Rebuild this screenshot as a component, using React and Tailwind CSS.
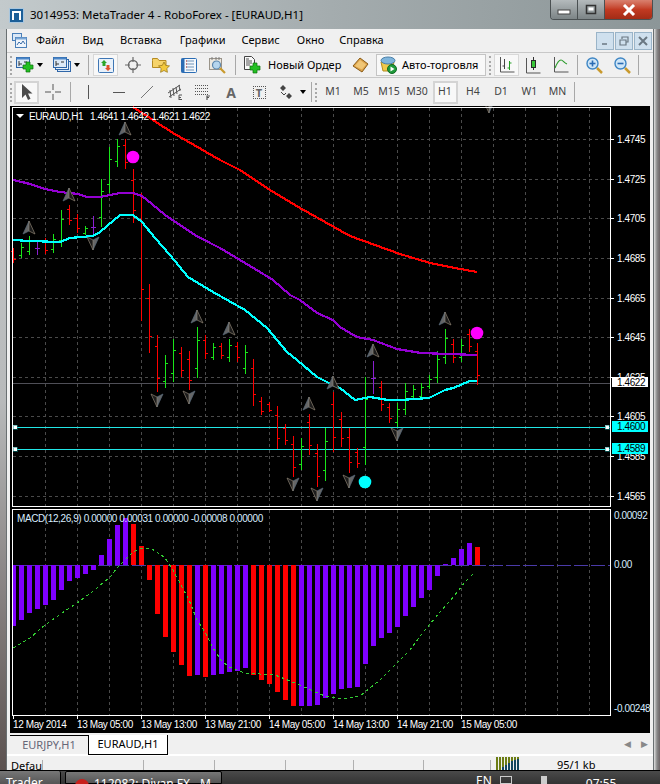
import React from 'react';

const UI = '"Noto Sans", sans-serif';
const CHART_FONT = '"Liberation Sans", sans-serif';

const RED = '#ff0000';
const LIME = '#19e619';
const VIOLET = '#8a1fd0';

// [colour, high, low] from left to right, 8px apart, last one at x=477
const bars = [
  ['r', 248, 263], ['g', 243, 258], ['g', 236, 255], ['p', 240, 255], ['r', 238, 254], ['g', 234, 253],
  ['g', 210, 247], ['r', 205, 225], ['r', 214, 233], ['g', 226, 235], ['p', 216, 237], ['g', 179, 227],
  ['g', 147, 193], ['g', 139, 167], ['r', 139, 169], ['r', 169, 223], ['r', 193, 321], ['r', 284, 353],
  ['r', 335, 392], ['g', 355, 388], ['g', 339, 382], ['r', 347, 377], ['r', 351, 390], ['g', 327, 378],
  ['r', 335, 359], ['g', 343, 360], ['r', 343, 359], ['g', 339, 362], ['r', 342, 362], ['g', 345, 374],
  ['r', 359, 406], ['r', 397, 415], ['r', 402, 412], ['r', 406, 449], ['r', 424, 445], ['r', 436, 477],
  ['g', 438, 470], ['r', 414, 455], ['r', 444, 487], ['g', 428, 481], ['r', 392, 452], ['r', 412, 447],
  ['r', 428, 473], ['r', 448, 468], ['g', 377, 465], ['p', 361, 394], ['r', 381, 411], ['r', 403, 423],
  ['g', 403, 427], ['g', 383, 415], ['g', 385, 399], ['g', 383, 399], ['g', 375, 389], ['g', 351, 383],
  ['g', 329, 364], ['r', 339, 363], ['g', 339, 362], ['r', 329, 352], ['r', 343, 385],
];

// MACD histogram: [colour, end y], zero line at y=565
const macd = [
  ['p', 626], ['p', 620], ['p', 613], ['p', 609], ['p', 605], ['p', 600], ['p', 590], ['p', 581], ['p', 578], ['p', 574],
  ['p', 570], ['p', 555], ['p', 539], ['p', 525], ['p', 518], ['r', 524], ['r', 546], ['r', 580], ['r', 614], ['r', 637],
  ['r', 652], ['r', 665], ['r', 676], ['p', 675], ['r', 677], ['p', 675], ['p', 674], ['p', 672], ['p', 671], ['p', 668],
  ['r', 675], ['r', 680], ['r', 684], ['r', 692], ['r', 700], ['r', 706], ['p', 706], ['p', 706], ['p', 705], ['p', 698],
  ['p', 694], ['p', 689], ['p', 688], ['p', 687], ['p', 664], ['p', 646], ['p', 638], ['p', 633], ['p', 627], ['p', 616],
  ['p', 607], ['p', 598], ['p', 590], ['p', 576], ['p', 564], ['p', 558], ['p', 549], ['p', 543], ['r', 547],
];

const purpleLine = '13,180 22,182 30,184 45,189 60,192 78,194 87,197 100,197 110,195 120,193 133,193 142,196 152,204 165,215 180,225 195,235 210,243 220,248 240,260 255,269 273,280 290,295 300,300 317,313 333,320 340,327 350,333 357,337 373,340 397,349 421,353 477,355';
const cyanLine = '13,240 30,241 60,242 70,238 93,236 100,232 120,215 133,215 142,222 155,238 170,255 188,277 193,280 213,292 245,310 267,328 287,352 297,360 317,377 333,385 340,388 355,400 370,397 388,400 400,400 429,398 445,390 453,388 470,381 477,381';
const redLine = '133,107 156,122 173,133 187,141 220,160 240,170 270,190 300,208 325,222 350,236 375,245 400,254 430,263 455,268 477,272';
const signalLine = '13,648 30,638 45,625 62,613 77,603 92,592 110,577 117,568 125,560 133,552 141,548 150,548 157,552 165,558 173,570 181,585 189,600 197,620 205,632 213,648 221,660 229,667 237,670 245,673 260,674 275,675 285,679 300,685 315,692 325,696 335,698 350,698 360,696 370,688 380,680 395,665 410,650 425,630 440,612 455,595 465,582 474,573';

const gridX = [45, 77, 109, 141, 173, 205, 237, 269, 301, 333, 365, 397, 429, 461, 493, 525, 557, 589];
const prices = [
  [139, '1.4745'], [179, '1.4725'], [218, '1.4705'], [258, '1.4685'], [298, '1.4665'],
  [337, '1.4645'], [377, '1.4625'], [416, '1.4605'], [456, '1.4585'], [496, '1.4565'],
];
const times = [
  [13, '12 May 2014'], [77, '13 May 05:00'], [141, '13 May 13:00'], [205, '13 May 21:00'],
  [269, '14 May 05:00'], [333, '14 May 13:00'], [397, '14 May 21:00'], [461, '15 May 05:00'],
];
const upArrows = [[29, 228], [69, 195], [125, 129], [197, 317], [229, 329], [309, 404], [333, 383], [373, 351], [445, 319]];
const downArrows = [[93, 243], [157, 400], [189, 397], [293, 484], [317, 494], [349, 481], [397, 434], [489, 106]];

function Fractal({ x, y, down }) {
  return (
    <g transform={`translate(${x} ${y})${down ? ' rotate(180)' : ''}`}>
      <polygon points="0,-7 -6,6 0,3" fill="#666" stroke="#56687a" strokeWidth="0.7" />
      <polygon points="0,-7 6,6 0,3" fill="#1c1c1c" stroke="#8f8474" strokeWidth="0.7" />
    </g>
  );
}

function Bar({ bar, i }) {
  const [c, h, l] = bar;
  const x = 13 + i * 8;
  const color = c === 'r' ? RED : c === 'g' ? LIME : VIOLET;
  const range = l - h;
  let open = h + Math.round(range * 0.8);
  let close = h + Math.round(range * 0.25);
  if (c === 'r') {
    open = h + Math.round(range * 0.2);
    close = h + Math.round(range * 0.75);
  }
  if (c === 'p') {
    open = h + Math.round(range / 2);
    close = open;
  }
  return (
    <g stroke={color} strokeWidth="1">
      <line x1={x + 0.5} x2={x + 0.5} y1={h} y2={l} />
      <line x1={x - 2} x2={x} y1={open + 0.5} y2={open + 0.5} />
      <line x1={x + 1} x2={x + 3} y1={close + 0.5} y2={close + 0.5} />
    </g>
  );
}

function Handle({ x, y }) {
  return <rect x={x} y={y - 2} width="4" height="4" fill="#fff" stroke="#0a8a8a" strokeWidth="0.5" />;
}

function Chart() {
  return (
    <svg width="640" height="627" viewBox="10 106 640 627" shapeRendering="crispEdges" className="block" style={{ fontFamily: CHART_FONT }}>
      <rect x="10" y="106" width="640" height="627" fill="#000" />

      {/* grid */}
      <g stroke="#4a4a4a" strokeWidth="1" strokeDasharray="3 3">
        {gridX.map((x) => (
          <g key={x}>
            <line x1={x + 0.5} x2={x + 0.5} y1="108" y2="506" />
            <line x1={x + 0.5} x2={x + 0.5} y1="510" y2="715" />
          </g>
        ))}
        {prices.map(([y]) => (
          <line key={y} x1="13" x2="610" y1={y + 0.5} y2={y + 0.5} />
        ))}
      </g>

      {/* levels */}
      <line x1="13" x2="610" y1="383.5" y2="383.5" stroke="#4f4f57" />
      <line x1="13" x2="610" y1="427.5" y2="427.5" stroke="#22e6e6" />
      <line x1="13" x2="610" y1="449.5" y2="449.5" stroke="#22e6e6" />

      {/* price bars */}
      {bars.map((b, i) => (
        <Bar key={i} bar={b} i={i} />
      ))}

      <polyline points={redLine} fill="none" stroke="#ff0000" strokeWidth="2.2" />
      <polyline points={purpleLine} fill="none" stroke="#9400d3" strokeWidth="2.2" />
      <polyline points={cyanLine} fill="none" stroke="#00ffff" strokeWidth="2.2" />

      <g shapeRendering="auto">
        {upArrows.map(([x, y]) => (
          <Fractal key={x} x={x} y={y} />
        ))}
        {downArrows.map(([x, y]) => (
          <Fractal key={x} x={x} y={y} down />
        ))}
        <circle cx="133" cy="157" r="6.3" fill="#ff00ff" />
        <circle cx="477" cy="333" r="6.3" fill="#ff00ff" />
        <circle cx="365" cy="482" r="6.3" fill="#00ffff" />
      </g>

      <Handle x={13} y={427} />
      <Handle x={13} y={449} />
      <Handle x={605} y={427} />
      <Handle x={605} y={449} />

      {/* macd */}
      <line x1="13" x2="610" y1="565.5" y2="565.5" stroke="#4a3aa8" strokeDasharray="14 3" />
      {macd.map(([c, y], i) => {
        const x = i === 0 ? 13 : 11 + i * 8;
        const w = i === 0 ? 3 : 5;
        return <rect key={i} x={x} y={Math.min(y, 565)} width={w} height={Math.abs(y - 565)} fill={c === 'r' ? '#ff0000' : '#7f00ff'} />;
      })}
      <polyline points={signalLine} fill="none" stroke="#32cd32" strokeWidth="1" strokeDasharray="3 3" />

      {/* frames */}
      <g stroke="#fff" strokeWidth="1" fill="none">
        <rect x="12.5" y="107.5" width="598" height="399" />
        <rect x="12.5" y="509.5" width="598" height="206" />
      </g>
      {times.map(([x]) => (
        <line key={x} x1={x + 0.5} x2={x + 0.5} y1="716" y2="719" stroke="#fff" />
      ))}
      {prices.map(([y]) => (
        <line key={y} x1="611" x2="614" y1={y + 0.5} y2={y + 0.5} stroke="#fff" />
      ))}

      {/* texts */}
      <g shapeRendering="auto" fill="#fff" fontSize="10" letterSpacing="-0.4">
        <polygon points="16,114 24,114 20,118" fill="#fff" />
        <text x="29" y="120">EURAUD,H1</text>
        <text x="90" y="120">1.4641 1.4642 1.4621 1.4622</text>
        <text x="17" y="522" fill="#d8ecff">MACD(12,26,9) 0.00000 0.00031 0.00000 -0.00008 0.00000</text>
        {prices.map(([y, p]) => (
          <text key={y} x="617" y={y + 4}>{p}</text>
        ))}
        <text x="614" y="519" fill="#d8ecff">0.00092</text>
        <text x="614" y="568" fill="#d8ecff">0.00</text>
        <text x="614" y="712" fill="#d8ecff">-0.00248</text>
        {times.map(([x, t]) => (
          <text key={x} x={x} y="728">{t}</text>
        ))}
      </g>

      <rect x="612" y="377" width="36" height="10" fill="#fff" />
      <rect x="612" y="421" width="36" height="11" fill="#00ffff" />
      <rect x="612" y="443" width="36" height="11" fill="#00ffff" />
      <g shapeRendering="auto" fill="#000" fontSize="10" letterSpacing="-0.4">
        <text x="617" y="386">1.4622</text>
        <text x="617" y="430">1.4600</text>
        <text x="617" y="452">1.4589</text>
      </g>
    </svg>
  );
}

function Grip() {
  return <div className="w-[4px] h-[19px] ml-[3px] shrink-0 border-l-2 border-dotted border-[#a8a8a8]" />;
}

function Sep({ className }) {
  return <div className={`w-[1px] h-[20px] shrink-0 bg-[#a8a8a8] ${className}`} />;
}

function Cell({ className, children }) {
  return <div className={`flex items-center justify-center shrink-0 h-full ${className}`}>{children}</div>;
}

function Caret() {
  return <div className="w-0 h-0 border-x-[3.5px] border-t-[4px] border-x-transparent border-t-black" />;
}

function PlusMark({ x, y }) {
  return <path d={`M${x + 3} ${y}h4v3h3v4h-3v3h-4v-3h-3v-4h3z`} fill="#22c022" stroke="#0d6f0d" strokeWidth="0.7" />;
}

function AppMenuIcon() {
  return (
    <svg width="15" height="15" viewBox="0 0 15 15" className="shrink-0 ml-[5px]">
      <rect x="0.5" y="0.5" width="9" height="7" fill="#dbe8f6" stroke="#4a7fb8" />
      <rect x="3.5" y="4.5" width="11" height="10" fill="#eef4fb" stroke="#4a7fb8" />
      <rect x="3.5" y="4.5" width="11" height="2" fill="#7ba7d6" />
      <path d="M5 12l2-3 2 2 2-3 2 3" stroke="#3c6ea8" fill="none" />
    </svg>
  );
}

function NewChartIcon() {
  return (
    <svg width="18" height="16" viewBox="0 0 18 16">
      <rect x="0.5" y="0.5" width="13" height="10" fill="#dce9f6" stroke="#2f66a8" />
      <rect x="0.5" y="0.5" width="13" height="2" fill="#4a86c8" />
      <path d="M3 4v5M3 7h3M8 5h3" stroke="#333" fill="none" />
      <PlusMark x={7} y={5} />
    </svg>
  );
}

function ProfilesIcon() {
  return (
    <svg width="18" height="16" viewBox="0 0 18 16">
      <rect x="4.5" y="4.5" width="13" height="10" fill="#dce9f6" stroke="#2f66a8" />
      <rect x="2.5" y="2.5" width="13" height="10" fill="#e8f0f8" stroke="#2f66a8" />
      <rect x="0.5" y="0.5" width="13" height="10" fill="#dce9f6" stroke="#2f66a8" />
      <rect x="0.5" y="0.5" width="13" height="2" fill="#4a86c8" />
      <path d="M3 4v5M3 7h3M8 5h3" stroke="#333" fill="none" />
    </svg>
  );
}

function MarketWatchIcon() {
  return (
    <svg width="16" height="15" viewBox="0 0 16 15">
      <rect x="0.5" y="0.5" width="15" height="14" rx="1" fill="#e8f1fa" stroke="#3f76b4" />
      <path d="M6 2l3 3H7.500v3h-3V5H3z" fill="#2aa52a" />
      <path d="M10 13l-3-3h1.500V7h3v3H13z" fill="#e0502a" />
    </svg>
  );
}

function CrosshairIcon() {
  return (
    <svg width="16" height="16" viewBox="0 0 16 16" fill="none" stroke="#6b6b6b">
      <circle cx="8" cy="8" r="4.500" strokeWidth="1.400" />
      <path d="M8 0v5M8 11v5M0 8h5M11 8h5" strokeWidth="1.200" />
    </svg>
  );
}

function FolderStarIcon() {
  return (
    <svg width="18" height="17" viewBox="0 0 18 17">
      <path d="M0.500 3.500V1.500h5l1.500 2h7v7h-13.500z" fill="#f6d36a" stroke="#b58a22" />
      <path d="M12 5l1.700 3.400 3.800.5-2.700 2.600.6 3.800-3.400-1.800-3.400 1.800.6-3.800-2.700-2.600 3.800-.5z" fill="#f3c93c" stroke="#9c7a1c" strokeWidth="0.800" />
    </svg>
  );
}

function NavigatorIcon() {
  return (
    <svg width="16" height="15" viewBox="0 0 16 15">
      <rect x="0.500" y="0.500" width="15" height="14" rx="1" fill="#f4f8fc" stroke="#2a6cb4" strokeWidth="1" />
      <rect x="0.500" y="0.500" width="3" height="14" fill="#2a6cb4" />
      <path d="M5 3h8M5 6h8M5 9h8M5 12h8" stroke="#6f93b8" />
      <path d="M5 3h1M5 6h1M5 9h1" stroke="#d0392b" />
    </svg>
  );
}

function TesterIcon() {
  return (
    <svg width="18" height="17" viewBox="0 0 18 17" fill="none">
      <rect x="0.500" y="1.500" width="12" height="11" fill="#ece8e0" stroke="#9a948a" />
      <path d="M3 0v3M7 0v3M10 0v3" stroke="#7d7d7d" />
      <circle cx="7.500" cy="8" r="4" fill="#b5d5ee" stroke="#5d88ae" strokeWidth="1.200" />
      <path d="M11 11l5 5" stroke="#c99a2e" strokeWidth="2.200" />
    </svg>
  );
}

function NewOrderIcon() {
  return (
    <svg width="17" height="18" viewBox="0 0 17 18">
      <path d="M0.500 0.500h7l3 3v10h-10z" fill="#fafafa" stroke="#444" />
      <path d="M2 5h6M2 7h6M2 9h4M2 3h3" stroke="#555" />
      <PlusMark x={6} y={7} />
    </svg>
  );
}

function HistoryIcon() {
  return (
    <svg width="17" height="16" viewBox="0 0 17 16">
      <path d="M1 9l7-8 8 6-6 8z" fill="#dca24a" stroke="#8a5c17" />
      <path d="M3 9l5-6 6 4.500-4 5z" fill="#f0c676" />
    </svg>
  );
}

function AutoTradingIcon() {
  return (
    <svg width="17" height="18" viewBox="0 0 17 18">
      <path d="M1 6l2 9h9l2-9z" fill="#f0c94a" stroke="#b48b1e" />
      <ellipse cx="8" cy="4.500" rx="7" ry="3.500" fill="#7fb5dc" stroke="#4a7fa8" />
      <circle cx="12" cy="13" r="4.500" fill="#1f9a3a" stroke="#0f6a22" />
      <path d="M10.500 10.500l4 2.500-4 2.500z" fill="#fff" />
    </svg>
  );
}

function BarChartIcon() {
  return (
    <svg width="16" height="16" viewBox="0 0 16 16" fill="none">
      <path d="M1.500 0v15h14" stroke="#555" />
      <path d="M5.500 2v10M3.500 9h2" stroke="#444" />
      <path d="M10.500 4v9M8.500 11h2M10.500 6h2" stroke="#23a023" />
    </svg>
  );
}

function CandleIcon() {
  return (
    <svg width="16" height="17" viewBox="0 0 16 17" fill="none">
      <path d="M1.500 1v15h14" stroke="#555" />
      <path d="M8.500 0v13" stroke="#333" />
      <rect x="6.500" y="3.500" width="4" height="7" fill="#3ac73a" stroke="#2a2a2a" />
    </svg>
  );
}

function LineChartIcon() {
  return (
    <svg width="16" height="16" viewBox="0 0 16 16" fill="none">
      <path d="M1.500 0v15h14" stroke="#555" />
      <path d="M2 11c2-5 4-8 6-8s3 3 6 4" stroke="#2d9c2d" strokeWidth="1.200" />
    </svg>
  );
}

function ZoomIcon({ plus }) {
  return (
    <svg width="17" height="17" viewBox="0 0 17 17" fill="none">
      <path d="M11 11l5 5" stroke="#c99a2e" strokeWidth="2.500" />
      <circle cx="6.500" cy="6.500" r="5.500" fill="#cfe6f7" stroke="#3f86c4" strokeWidth="1.400" />
      <path d="M3.500 6.500h6" stroke="#2a6cb4" strokeWidth="1.600" />
      {plus && <path d="M6.500 3.500v6" stroke="#2a6cb4" strokeWidth="1.600" />}
    </svg>
  );
}

function CursorIcon() {
  return (
    <svg width="12" height="16" viewBox="0 0 12 16">
      <path d="M1 0v14l3.500-3.500L7 16l2.500-1.200L7 9.500h4.500z" fill="#4a4a4a" />
    </svg>
  );
}

function CrossIcon() {
  return (
    <svg width="16" height="16" viewBox="0 0 16 16" stroke="#555" fill="none">
      <path d="M8 0v6M8 10v6M0 8h6M10 8h6" />
    </svg>
  );
}

function ChannelIcon() {
  return (
    <svg width="17" height="17" viewBox="0 0 17 17" fill="none" stroke="#555">
      <path d="M1 9l12-8M2 13l12-8M3 6l1 8M6 4l1 8M9 3l1 7M12 1l1 6" />
      <path d="M12 16v-5h3M12 13.500h2M12 15.500h3" strokeWidth="1" />
    </svg>
  );
}

function FiboIcon() {
  return (
    <svg width="17" height="15" viewBox="0 0 17 15" stroke="#555" fill="none">
      <path d="M0 0.500h14M0 3.500h14M0 6.500h14M0 9.500h14" strokeDasharray="1 1" />
      <path d="M12 15v-4h3M12 12.500h2" strokeWidth="1.200" />
    </svg>
  );
}

function ArrowsIcon() {
  return (
    <svg width="13" height="14" viewBox="0 0 13 14" fill="#444">
      <path d="M3 0l3 3-3 3-3-3zM9 8l3 3-3 3-3-3z" />
      <path d="M1 7l3 3 2-2" stroke="#444" fill="none" />
    </svg>
  );
}

function WinGlyph({ children }) {
  return (
    <svg width="18" height="12" viewBox="0 0 18 12">
      {children}
    </svg>
  );
}

function MdiButton({ children }) {
  return (
    <div className="w-[18px] h-[18px] flex items-center justify-center bg-[#cfe0ee] border border-[#9ab4c8]">
      <svg width="10" height="10" viewBox="0 0 10 10" fill="none" stroke="#6a7782" strokeWidth="1.500">
        {children}
      </svg>
    </div>
  );
}

const menuItems = [
  ['Файл', 'ml-[9px]'],
  ['Вид', 'ml-[18px]'],
  ['Вставка', 'ml-[17px]'],
  ['Графики', 'ml-[18px]'],
  ['Сервис', 'ml-[16px]'],
  ['Окно', 'ml-[17px]'],
  ['Справка', 'ml-[15px]'],
];

const periods = [
  ['M1', 'w-[28px]'], ['M5', 'w-[28px]'], ['M15', 'w-[28px]'], ['M30', 'w-[28px]'],
  ['H1', 'w-[25px] mx-[1.500px] bg-[#f8f8f8] border-2 border-[#d4d4d4]'], ['H4', 'w-[28px]'],
  ['D1', 'w-[28px]'], ['W1', 'w-[29px]'], ['MN', 'w-[27px]'],
];

export default function App() {
  return (
    <div
      className="w-[660px] h-[784px] flex flex-col overflow-hidden bg-gradient-to-r from-[#c3cacc] via-[#a4acae] to-[#8c9698]"
      style={{ fontFamily: UI }}
    >
      {/* title bar */}
      <div className="h-[29px] shrink-0 flex items-start">
        <div className="mt-[8px] ml-[9px] w-[15px] h-[15px] bg-[#1c5f98] border border-[#a9c7df] flex items-center justify-center">
          <div className="w-[9px] h-[9px] border-2 border-white border-b-0 bg-[#1c5f98]" />
        </div>
        <div className="ml-[6px] mt-[5px] text-[11.500px] leading-[20px] text-black whitespace-nowrap">
          3014953: MetaTrader 4 - RoboForex - [EURAUD,H1]
        </div>
        <div className="ml-auto mr-[7px] flex h-[20px] rounded-b-[4px] border border-t-0 border-[#4a5052] overflow-hidden">
          <div className="w-[27px] flex items-center justify-center border-r border-[#4a5052] bg-gradient-to-b from-[#b4babc] to-[#7c8486]">
            <WinGlyph>
              <rect x="3" y="6" width="12" height="4" fill="#fff" stroke="#444" />
            </WinGlyph>
          </div>
          <div className="w-[27px] flex items-center justify-center border-r border-[#4a5052] bg-gradient-to-b from-[#b4babc] to-[#7c8486]">
            <WinGlyph>
              <rect x="4.500" y="1.500" width="9" height="8" fill="none" stroke="#333" strokeWidth="1.500" />
              <rect x="6.500" y="3.500" width="5" height="3" fill="#fff" />
            </WinGlyph>
          </div>
          <div className="w-[47px] flex items-center justify-center bg-gradient-to-b from-[#d9806e] via-[#c23a22] to-[#a32c16]">
            <WinGlyph>
              <path d="M4 1l10 10M14 1L4 11" stroke="#fff" strokeWidth="3" />
            </WinGlyph>
          </div>
        </div>
      </div>

      <div className="h-[741px] shrink-0 flex">
        <div className="w-[6px] shrink-0 bg-gradient-to-b from-[#c8cccd] via-[#b8babb] to-[#5c5250]" />

        {/* client area */}
        <div className="w-[648px] shrink-0 flex flex-col bg-[#f0f0f0] border-x border-[#6a7072]">
          <div className="h-[23px] shrink-0 flex items-center text-[11px] text-black">
            <AppMenuIcon />
            {menuItems.map(([m, cls]) => (
              <span key={m} className={cls}>{m}</span>
            ))}
            <div className="ml-auto mr-[1px] flex gap-[1px]">
              <MdiButton><path d="M2 8h5" /></MdiButton>
              <MdiButton><path d="M1 4h6v5H1zM3 3V1h6v5H7" strokeWidth="1.200" /></MdiButton>
              <MdiButton><path d="M1 1l8 8M9 1l-8 8" strokeWidth="2" /></MdiButton>
            </div>
          </div>

          {/* main toolbar */}
          <div className="h-[26px] shrink-0 flex items-center border-y border-[#c8c8c8] text-[11px] text-black">
            <Grip />
            <Cell className="w-[22px]"><NewChartIcon /></Cell>
            <Cell className="w-[8px]"><Caret /></Cell>
            <Cell className="w-[22px] ml-[7px]"><ProfilesIcon /></Cell>
            <Cell className="w-[8px]"><Caret /></Cell>
            <Sep className="ml-[7px]" />
            <Cell className="w-[25px] !h-[22px] ml-[4px] bg-[#f8f8f8] border border-[#d8d8d8]"><MarketWatchIcon /></Cell>
            <Cell className="w-[29px]"><CrosshairIcon /></Cell>
            <Cell className="w-[27px]"><FolderStarIcon /></Cell>
            <Cell className="w-[29px]"><NavigatorIcon /></Cell>
            <Cell className="w-[29px]"><TesterIcon /></Cell>
            <Sep className="ml-[3px]" />
            <Cell className="w-[17px] ml-[8px]"><NewOrderIcon /></Cell>
            <span className="ml-[7px] w-[80px] whitespace-nowrap">Новый Ордер</span>
            <Cell className="w-[24px]"><HistoryIcon /></Cell>
            <div className="ml-[4px] w-[110px] h-[22px] shrink-0 flex items-center bg-[#f8f8f8] border border-[#c4c4c4]">
              <Cell className="w-[17px] ml-[3px]"><AutoTradingIcon /></Cell>
              <span className="ml-[5px] whitespace-nowrap">Авто-торговля</span>
            </div>
            <Grip />
            <Cell className="w-[25px] !h-[22px] ml-[1px] bg-[#f8f8f8] border border-[#d8d8d8]"><BarChartIcon /></Cell>
            <Cell className="w-[28px]"><CandleIcon /></Cell>
            <Cell className="w-[28px]"><LineChartIcon /></Cell>
            <Sep className="ml-[2px]" />
            <Cell className="w-[28px] ml-[2px]"><ZoomIcon plus /></Cell>
            <Cell className="w-[28px]"><ZoomIcon /></Cell>
            <Sep className="ml-[2px]" />
          </div>

          {/* line studies and periods */}
          <div className="h-[28px] shrink-0 flex items-center text-[10.500px] text-[#444]">
            <Grip />
            <Cell className="w-[25px] !h-[23px] bg-[#f8f8f8] border-2 border-[#d4d4d4]"><CursorIcon /></Cell>
            <Cell className="w-[28px]"><CrossIcon /></Cell>
            <Sep className="ml-[3px]" />
            <Cell className="w-[34px]"><div className="w-[1px] h-[14px] bg-[#555]" /></Cell>
            <Cell className="w-[28px]"><div className="w-[12px] h-[1px] bg-[#555]" /></Cell>
            <Cell className="w-[28px]">
              <svg width="14" height="14" viewBox="0 0 14 14"><path d="M1 13L13 1" stroke="#777" /></svg>
            </Cell>
            <Cell className="w-[28px]"><ChannelIcon /></Cell>
            <Cell className="w-[28px]"><FiboIcon /></Cell>
            <Cell className="w-[28px] text-[14px] font-bold text-[#666]">A</Cell>
            <Cell className="w-[28px]">
              <div className="w-[13px] h-[13px] border border-dotted border-[#555] flex items-center justify-center text-[11px] font-bold leading-none text-[#666]">T</div>
            </Cell>
            <Cell className="w-[26px]"><ArrowsIcon /></Cell>
            <Cell className="w-[8px]"><Caret /></Cell>
            <Sep className="ml-[4px]" />
            <Grip />
            {periods.map(([p, cls]) => (
              <Cell key={p} className={`${cls} !h-[23px]`}>{p}</Cell>
            ))}
            <Sep className="ml-[3px]" />
          </div>

          <div className="h-[627px] shrink-0 pl-[3px] bg-[#f0f0f0]">
            <Chart />
          </div>

          {/* chart tabs */}
          <div className="h-[23px] shrink-0 flex items-start pl-[3px] text-[11px] border-b-2 border-white">
            <div className="w-[78px] h-[20px] mt-[2px] flex items-center justify-center text-[#667] border-t border-black">EURJPY,H1</div>
            <div className="w-[80px] h-[20px] mt-[2px] flex items-center justify-center bg-white text-black border-x border-b border-black">EURAUD,H1</div>
            <div className="ml-auto mr-[5px] mt-[6px] flex gap-[10px] text-[#888] text-[9px] leading-none">
              <span>◀</span>
              <span>▶</span>
            </div>
          </div>

          {/* status bar */}
          <div className="h-[14px] shrink-0 flex items-start text-[11px] leading-[14px] overflow-hidden">
            <div className="w-[36px] pl-[4px] mt-[4px] border-r border-[#b0b0b0] h-[10px]">
              <span className="block mt-[-1px]">Defau</span>
            </div>
            {['w-[101px]', 'w-[71px]', 'w-[71px]', 'w-[68px]', 'w-[70px]', 'w-[67px]'].map((w, i) => (
              <div key={i} className={`${w} mt-[4px] h-[10px] border-r border-[#b0b0b0]`} />
            ))}
            <div className="ml-[5px] mt-[1px] shrink-0">
              <svg width="23" height="13" viewBox="0 0 23 13">
                <path d="M1 0v13M4 0v13M7 0v13M10 0v13M13 0v13M16 0v13M19 0v13M22 0v13" stroke="#6c7d14" strokeWidth="2" />
                <path d="M7 10v3M10 8v5M13 6v7M16 4v9M19 3v10M22 2v11" stroke="#12465f" strokeWidth="2" />
              </svg>
            </div>
            <span className="ml-[38px] mt-[2px] whitespace-nowrap">95/1 kb</span>
          </div>
        </div>

        <div className="w-[6px] shrink-0 bg-gradient-to-r from-[#e0e0e0] via-[#8a8a8a] to-[#6c6466]" />
      </div>

      {/* taskbar */}
      <div className="h-[14px] shrink-0 flex items-start border-t border-black bg-gradient-to-b from-[#4a4a4a] to-[#333] text-white text-[12px] leading-[14px] overflow-hidden">
        <div className="w-[61px] h-full pt-[5px] pl-[6px] bg-gradient-to-b from-[#777] to-[#555] rounded-tr-[2px] border-r border-black whitespace-nowrap">Trader</div>
        <div className="ml-[4px] w-[157px] h-full pt-[5px] flex bg-gradient-to-b from-[#777] to-[#555] rounded-t-[2px] border border-black whitespace-nowrap">
          <div className="ml-[9px] mt-[2px] w-[14px] h-[14px] rounded-full bg-[#c8201c] shrink-0" />
          <span className="ml-[5px]">112082: Divan FX - M...</span>
        </div>
        <span className="ml-[254px] pt-[3px]">EN</span>
        <div className="ml-[8px] mt-[5px] w-[12px] h-[8px] border border-[#ccc] shrink-0" />
        <div className="ml-[29px] mt-[5px] w-[6px] h-[8px] bg-[#ccc] shrink-0" />
        <span className="ml-[39px] pt-[6px]">07:55</span>
      </div>
    </div>
  );
}
